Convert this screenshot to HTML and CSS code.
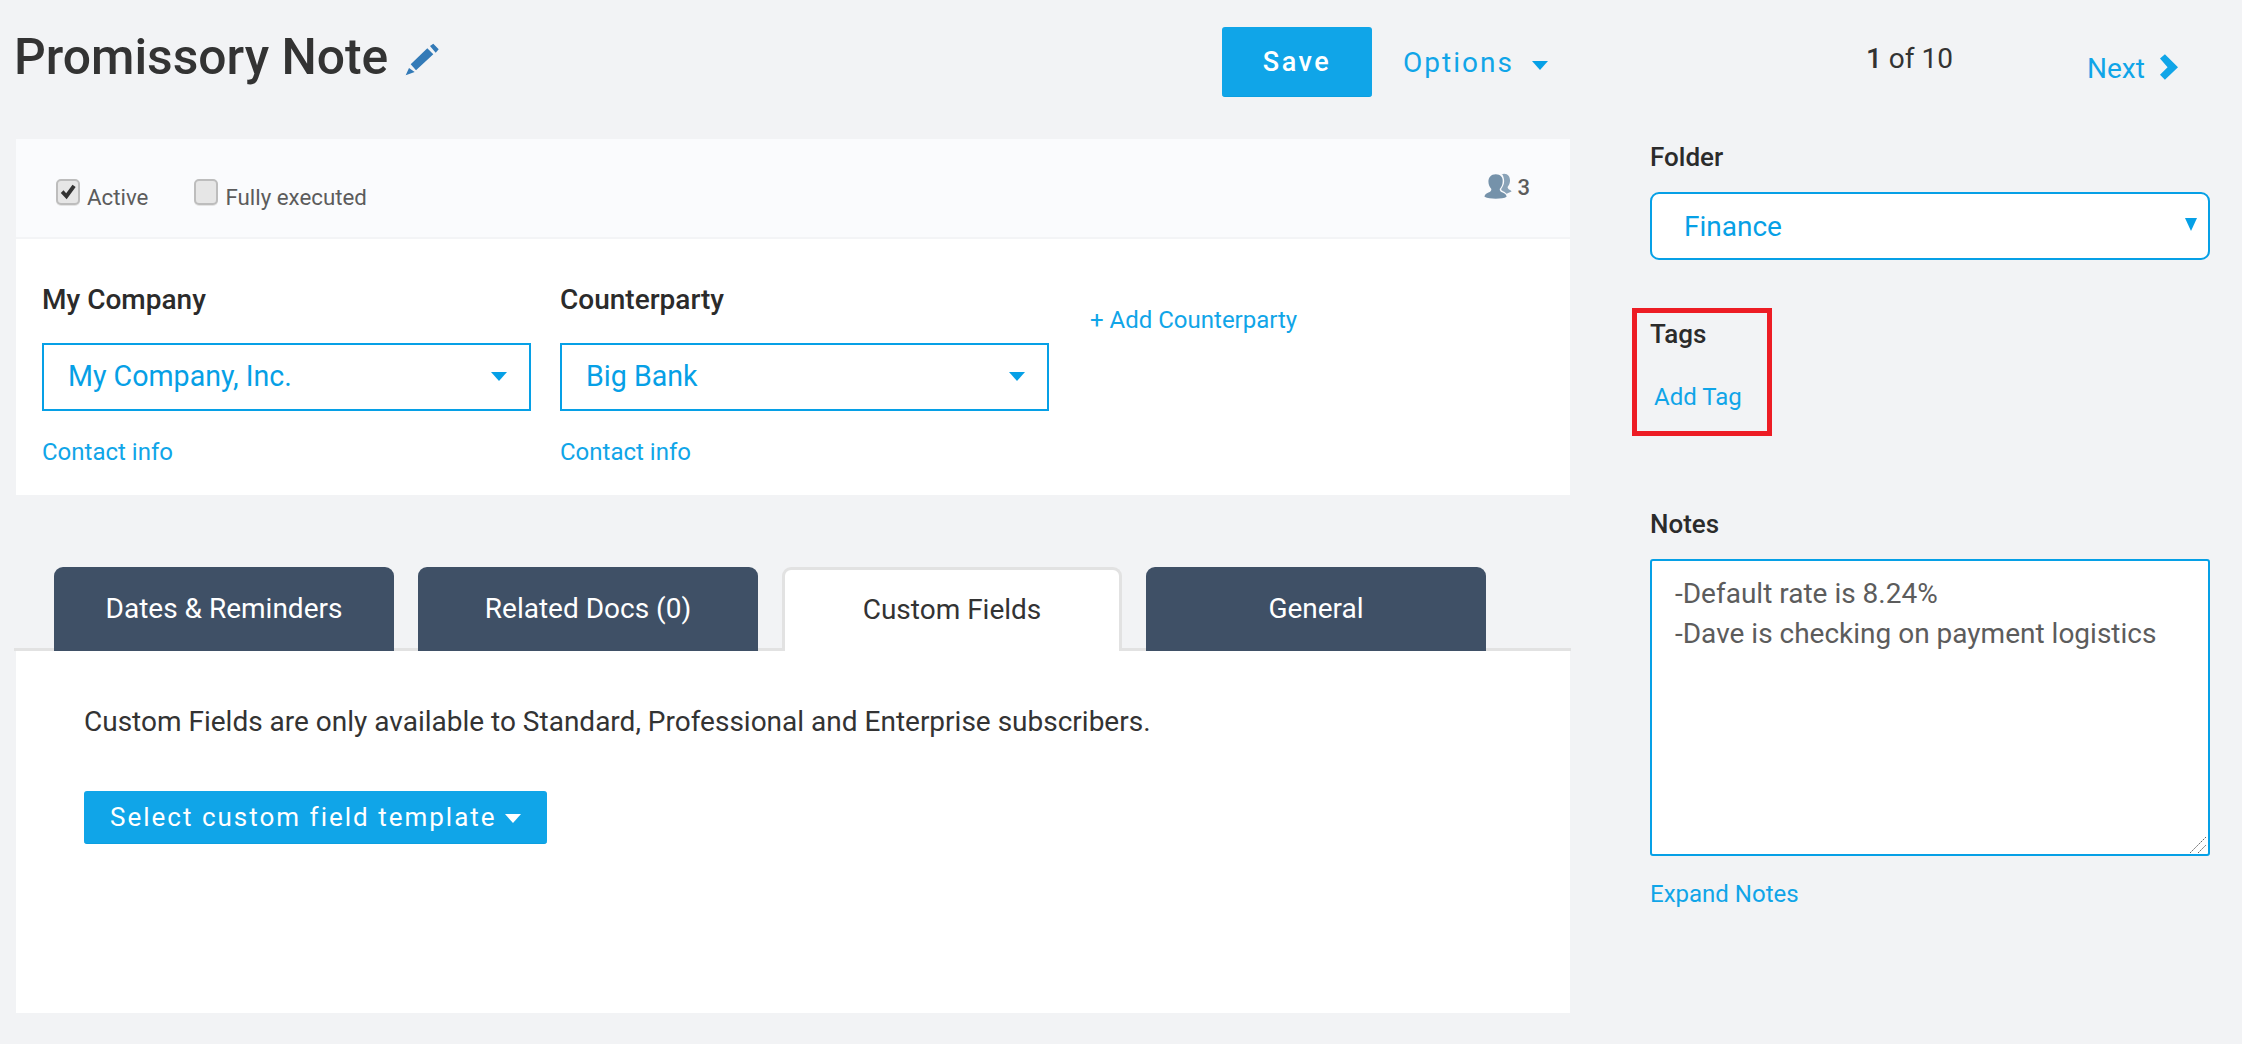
FILE: index.html
```html
<!DOCTYPE html>
<html lang="en">
<head>
<meta charset="utf-8">
<title>Promissory Note</title>
<link rel="stylesheet" href="styles.css">
</head>
<body>
<div class="page">
  <header class="topbar">
    <div class="title-wrap">
      <h1 class="title">Promissory Note</h1>
      <svg class="pencil" viewBox="11 12 34 33"><path d="M16.700 33.300 33.300 17.300 39.300 23.300 22 39.300zM36 15 39.300 12.700 44.700 18.300 41.700 21.700zM11.700 44.300 15 37 20.700 41z"/></svg>
    </div>
    <div class="actions">
      <button class="btn btn-save">Save</button>
      <a class="options">Options<span class="caret caret-sm"></span></a>
    </div>
    <div class="pager"><b>1</b> of 10</div>
    <a class="next">Next<svg class="chevron" viewBox="0 0 18.300 26"><path d="M0 4.300 5 0 18.300 13.300 5 26 0 21 7.700 13.300z"/></svg></a>
  </header>

  <div class="columns">
    <main class="main">
      <section class="card">
        <div class="card-head">
          <label class="check">
            <span class="box"><svg viewBox="0 0 20 20"><path d="M2 11 5 8l3 3.500L15 2l3.500 2.500L8.500 18z"/></svg></span>
            <span>Active</span>
          </label>
          <label class="check check-second">
            <span class="box"></span>
            <span>Fully executed</span>
          </label>
          <div class="people">
            <svg viewBox="9 7 28.500 26">
              <path class="back" d="M27 8c.7-.3 1.500-.5 2.500-.5 4 0 6 3 6 7 0 2.500-1 5-2.500 6.500 0 1.500 1 2.500 2.500 3 1 .5 1.500 1 1.500 1.500l-5 2.500c-1-1.500-3-2.500-4-3-1-.5-1.500-1-1.500-2 2-2.500 3-5 3-8 0-3-1-6-2.500-7.500z"/>
              <path d="M21 8c-5 0-7.500 3.500-7.500 7.500 0 3 1 5.500 3 7.500 0 2-1 3-3 3.500-3 1-4 3-4 4.500 3 1.500 7 2 11.500 2s9-.5 11-2c0-1.500-1-3.500-4-4.500-2-.5-3-1.500-3-3.500 2-2 3-4.500 3-7.500C28.500 11.500 26 8 21 8z"/>
            </svg>
            <span>3</span>
          </div>
        </div>
        <div class="parties">
          <div class="party">
            <div class="label label-lg">My Company</div>
            <div class="select select-party"><span>My Company, Inc.</span><span class="caret"></span></div>
            <a class="link contact">Contact info</a>
          </div>
          <div class="party">
            <div class="label label-lg">Counterparty</div>
            <div class="select select-party"><span>Big Bank</span><span class="caret"></span></div>
            <a class="link contact">Contact info</a>
          </div>
          <a class="link add-party">+ Add Counterparty</a>
        </div>
      </section>

      <nav class="tabs">
        <div class="tab">Dates &amp; Reminders</div>
        <div class="tab">Related Docs (0)</div>
        <div class="tab tab-active">Custom Fields</div>
        <div class="tab">General</div>
      </nav>
      <section class="tab-body">
        <p class="notice">Custom Fields are only available to Standard, Professional and Enterprise subscribers.</p>
        <button class="btn btn-template">Select custom field template<span class="caret caret-white"></span></button>
      </section>
    </main>

    <aside class="side">
      <div class="label">Folder</div>
      <div class="select select-folder"><span>Finance</span><span class="caret caret-tall"></span></div>
      <div class="tags-box">
        <div class="label">Tags</div>
        <a class="link add-tag">Add Tag</a>
      </div>
      <div class="label notes-label">Notes</div>
      <div class="notes">
        <div>-Default rate is 8.24%</div>
        <div>-Dave is checking on payment logistics</div>
        <svg class="grip" viewBox="0 0 18 18"><path d="M1 17 17 1M9 17l8-8"/></svg>
      </div>
      <a class="link expand">Expand Notes</a>
    </aside>
  </div>
</div>
</body>
</html>
```

FILE: styles.css
```css
* { box-sizing: border-box; }
html, body { margin: 0; height: 100%; }
body {
  background: #f2f3f5;
  font-family: Roboto, "Liberation Sans", sans-serif;
  color: #2b2b2b;
  overflow: hidden;
}
.page { padding-left: 16px; width: 2242px; }
a { color: #10a5e8; }
.link { font-size: 24px; line-height: 30px; display: block; }

.topbar { display: flex; height: 139px; }
.title-wrap { display: flex; align-items: flex-start; width: 1206px; padding-top: 27px; }
.title { margin: 0 0 0 -2px; font-size: 49.800px; line-height: 60px; font-weight: 500; color: #333; }
.pencil { width: 34px; height: 33px; fill: #337ab7; margin: 16px 0 0 17px; }
.actions { display: flex; align-items: flex-start; width: 644px; padding-top: 27px; }
.btn {
  background: #10a5e8; color: #fff; border: 0; border-bottom: 1px solid #0b9fe0;
  border-radius: 3px; font-family: inherit; letter-spacing: 2px;
}
.btn-save { width: 150px; height: 70px; font-size: 27px; font-weight: 500; letter-spacing: 2.500px; }
.options { margin-left: 31px; margin-top: 20px; font-size: 28px; line-height: 32px; letter-spacing: 2px; display: flex; align-items: center; }
.caret { width: 0; height: 0; border-left: 8px solid transparent; border-right: 8px solid transparent; border-top: 9px solid #06a0e6; }
.caret-sm { margin-left: 18px; margin-top: 4px; }
.pager { width: 221px; padding-top: 42px; font-size: 28px; line-height: 34px; color: #333; }
.pager b { font-weight: 500; }
.next { display: flex; align-items: flex-start; padding-top: 51px; font-size: 28px; line-height: 36px; }
.chevron { width: 18px; height: 26px; fill: #10a5e8; margin: 3px 0 0 15px; }

.columns { display: flex; gap: 80px; }
.main { width: 1554px; }
.side { width: 560px; }

.card { background: #fff; height: 356px; }
.card-head {
  height: 100px; background: #fafbfd; border-bottom: 2px solid #f3f4f6;
  display: flex; align-items: flex-start; padding: 40px 40px 0 40px; color: #5c5c5c;
}
.check { display: flex; align-items: flex-start; font-size: 22.300px; line-height: 30px; }
.check span:last-child { margin-top: 3px; }
.check-second { margin-left: 46px; }
.box {
  width: 24px; height: 26px; margin-right: 7px; background: #e6e6e6;
  border: 2px solid #bdbdbd; border-radius: 5px; box-shadow: 0 1px 0 #e4e4e4;
  display: flex; align-items: center; justify-content: center;
}
.box svg { width: 18px; height: 18px; fill: #333; }
.people { margin-left: auto; margin-top: -6px; display: flex; align-items: center; gap: 5px; font-size: 22px; font-weight: 500; line-height: 30px; }
.people svg { width: 28px; height: 26px; margin-bottom: 4px; fill: #7592aa; }
.people .back { fill: #8aa3b8; }

.parties { display: flex; padding: 43px 0 0 26px; }
.party { width: 518px; }
.label { font-size: 26px; font-weight: 500; line-height: 36px; color: #2b2b2b; }
.label-lg { font-size: 28px; }
.select {
  height: 68px; background: #fff; border: 2px solid #06a0e6;
  display: flex; align-items: center; justify-content: space-between;
  font-size: 28px; color: #06a0e6;
}
.select-party { width: 489px; margin-top: 25px; padding: 0 22px 2px 24px; font-size: 28.600px; }
.contact { margin-top: 26px; }
.add-party { margin-top: 23px; margin-left: 12px; }

.tabs { display: flex; gap: 24px; height: 84px; margin: 72px -1px 0 -2px; padding-left: 40px; border-bottom: 3px solid #e2e2e2; }
.tab {
  width: 340px; height: 84px; background: #3f5066; color: #fff; border-radius: 9px 9px 0 0;
  font-size: 28px; text-align: center; line-height: 84px;
}
.tab-active { background: #fff; color: #333; border: 3px solid #e2e2e2; border-bottom: 0; line-height: 79px; }
.tab-body { background: #fff; height: 362px; padding: 52px 68px 0; }
.notice { margin: 0; font-size: 28px; line-height: 38px; color: #333; }
.btn-template { margin-top: 50px; width: 463px; height: 53px; font-size: 26px; text-align: left; padding: 0 0 0 26px; display: flex; align-items: center; white-space: nowrap; }
.caret-white { border-top-color: #fff; margin-left: 8px; margin-top: 3px; }

.select-folder { margin-top: 17px; border-radius: 9px; padding: 0 11px 0 32px; }
.caret-tall { border-left-width: 6px; border-right-width: 6px; border-top-width: 13px; margin-bottom: 3px; }
.tags-box { margin: 48px 0 0 -18px; width: 140px; height: 128px; border: 5px solid #ed1c24; padding: 3px 0 0 13px; }
.add-tag { margin-left: 4px; margin-top: 30px; }
.notes-label { margin-top: 70px; }
.notes {
  position: relative; margin-top: 17px; height: 297px; background: #fff; border: 2px solid #06a0e6; border-radius: 3px;
  padding: 13px 23px; font-size: 28px; line-height: 40px; color: #5c5c5c;
}
.grip { position: absolute; right: 1px; bottom: 0; width: 18px; height: 18px; fill: none; stroke: #666; stroke-width: 1; stroke-dasharray: 2 1; }
.expand { margin-top: 23px; }
```
